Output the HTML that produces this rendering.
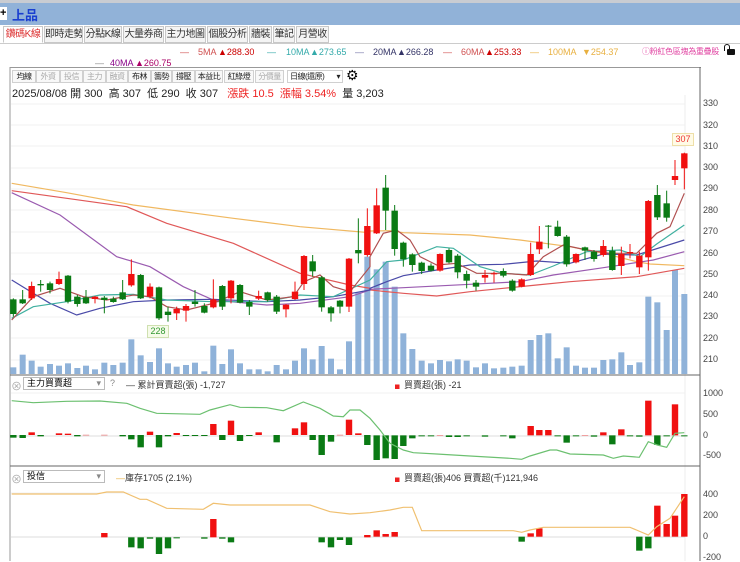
<!DOCTYPE html>
<html><head><meta charset="utf-8"><style>
*{margin:0;padding:0;box-sizing:border-box}
body{width:740px;height:561px;overflow:hidden;background:#fff;font-family:"Liberation Sans","Noto Sans CJK TC",sans-serif;position:relative}
.abs{position:absolute;white-space:nowrap}
.tab{position:absolute;top:26px;height:17px;border:1px solid #c8c8c8;background:#f4f4f4;font-size:10px;line-height:15px;text-align:center;color:#333;white-space:nowrap;overflow:hidden;letter-spacing:-0.5px}
.btn{position:absolute;top:70px;height:13px;border:1px solid #d0d0d0;background:#f8f8f8;font-size:8px;line-height:11px;text-align:center;color:#222;white-space:nowrap;overflow:hidden;letter-spacing:-0.5px}
.g{color:#aaa}
.lg{position:absolute;font-size:9px;white-space:nowrap}
.ax{position:absolute;left:703px;font-size:9px;color:#444}
</style></head><body>
<div class="abs" style="left:0;top:0;width:740px;height:3px;background:#c9ccd2"></div>
<div class="abs" style="left:0;top:3px;width:740px;height:22px;background:#91b2d8"></div>
<div class="abs" style="left:0;top:7px;width:7px;height:13px;background:#fff;font-size:11px;line-height:13px;font-weight:bold">+</div>
<div class="abs" style="left:12px;top:5px;font-size:13px;color:#1a3fd0;font-weight:bold">上品</div>
<div class="abs" style="left:0;top:25px;width:740px;height:19px;background:#fff"></div>
<div class="tab" style="left:3px;width:40px;background:#fff;color:#d33;border-bottom-color:#fff">鑽碼K線</div>
<div class="tab" style="left:44px;width:39px">即時走勢</div>
<div class="tab" style="left:84px;width:38px">分點K線</div>
<div class="tab" style="left:123px;width:41px">大量券商</div>
<div class="tab" style="left:165px;width:41px">主力地圖</div>
<div class="tab" style="left:207px;width:41px">個股分析</div>
<div class="tab" style="left:249px;width:23px">牆裝</div>
<div class="tab" style="left:273px;width:22px">筆記</div>
<div class="tab" style="left:296px;width:33px">月營收</div>
<div class="abs" style="left:0;top:43px;width:740px;height:1px;background:#ccc"></div>
<div class="lg" style="left:180px;top:47px;color:#d05050">—</div><div class="lg" style="left:198px;top:47px;color:#d05050">5MA</div><div class="lg" style="left:218px;top:47px;color:#c00">▲288.30</div>
<div class="lg" style="left:267px;top:47px;color:#3aa">—</div><div class="lg" style="left:286px;top:47px;color:#3aa">10MA</div><div class="lg" style="left:310px;top:47px;color:#3aa">▲273.65</div>
<div class="lg" style="left:355px;top:47px;color:#77a">—</div><div class="lg" style="left:373px;top:47px;color:#336">20MA</div><div class="lg" style="left:397px;top:47px;color:#336">▲266.28</div>
<div class="lg" style="left:443px;top:47px;color:#d05050">—</div><div class="lg" style="left:461px;top:47px;color:#d05050">60MA</div><div class="lg" style="left:485px;top:47px;color:#c00">▲253.33</div>
<div class="lg" style="left:530px;top:47px;color:#e8b040">—</div><div class="lg" style="left:548px;top:47px;color:#e8b040">100MA</div><div class="lg" style="left:582px;top:47px;color:#e8b040">▼254.37</div>
<div class="lg" style="left:642px;top:46px;color:#e040a0;font-size:8px;letter-spacing:-0.3px">ⓘ粉紅色區塊為重疊股</div>
<div class="abs" style="left:727px;top:49px;width:8px;height:6px;background:#111;border-radius:1px"></div>
<div class="abs" style="left:724px;top:44px;width:6px;height:7px;border:1.5px solid #111;border-bottom:none;border-radius:3px 3px 0 0"></div>
<div class="lg" style="left:95px;top:58px;color:#888">—</div><div class="lg" style="left:110px;top:58px;color:#808">40MA</div><div class="lg" style="left:135px;top:58px;color:#a06">▲260.75</div>
<div class="abs" style="left:10px;top:67px;width:691px;height:1px;background:#999"></div>
<div class="btn" style="left:12px;width:24px">均線</div>
<div class="btn g" style="left:36px;width:24px">外資</div>
<div class="btn g" style="left:60px;width:23px">投信</div>
<div class="btn g" style="left:83px;width:23px">主力</div>
<div class="btn g" style="left:106px;width:22px">融資</div>
<div class="btn" style="left:128px;width:23px">布林</div>
<div class="btn" style="left:151px;width:21px">籌勢</div>
<div class="btn" style="left:172px;width:23px">撐壓</div>
<div class="btn" style="left:195px;width:28px">本益比</div>
<div class="btn" style="left:224px;width:30px">紅綠燈</div>
<div class="btn g" style="left:255px;width:29px">分價量</div>
<div class="btn" style="left:287px;width:56px;text-align:left;padding-left:2px;background:#fff">日線(還原) <span style="float:right;padding-right:2px">▾</span></div>
<div class="abs" style="left:346px;top:67px;font-size:14px">⚙</div>
<div class="abs" style="left:12px;top:85px;font-size:11px;color:#222;white-space:nowrap">2025/08/08 開 300 &nbsp;高 307 &nbsp;低 290 &nbsp;收 307 &nbsp;&nbsp;<span style="color:#e22">漲跌 10.5 &nbsp;漲幅 3.54%</span> &nbsp;量 3,203</div>
<svg id="s" class="abs" style="left:0;top:0" width="740" height="561"></svg>
<div class="abs" style="left:11px;top:378px;font-size:11px;color:#aaa">⊗</div>
<div class="abs" style="left:23px;top:377px;width:82px;height:13px;border:1px solid #bbb;font-size:9px;line-height:11px;padding-left:3px">主力買賣超<span style="float:right;padding-right:3px;color:#888">▾</span></div>
<div class="abs" style="left:110px;top:378px;font-size:9px;color:#888">?</div>
<div class="lg" style="left:126px;top:378px;color:#333">— 累計買賣超(張) -1,727</div>
<div class="lg" style="left:395px;top:378px;color:#333"><span style="color:#e22">▖</span>買賣超(張) -21</div>
<div class="abs" style="left:11px;top:471px;font-size:11px;color:#aaa">⊗</div>
<div class="abs" style="left:23px;top:470px;width:82px;height:13px;border:1px solid #bbb;font-size:9px;line-height:11px;padding-left:3px">投信<span style="float:right;padding-right:3px;color:#888">▾</span></div>
<div class="lg" style="left:116px;top:471px;color:#333"><span style="color:#e8b040">—</span>庫存1705 (2.1%)</div>
<div class="lg" style="left:395px;top:471px;color:#333"><span style="color:#e22">▖</span>買賣超(張)406 買賣超(千)121,946</div>
<div class="ax" style="top:98px">330</div><div class="ax" style="top:120px">320</div><div class="ax" style="top:141px">310</div><div class="ax" style="top:162px">300</div><div class="ax" style="top:183px">290</div><div class="ax" style="top:205px">280</div><div class="ax" style="top:226px">270</div><div class="ax" style="top:248px">260</div><div class="ax" style="top:269px">250</div><div class="ax" style="top:290px">240</div><div class="ax" style="top:311px">230</div><div class="ax" style="top:333px">220</div><div class="ax" style="top:354px">210</div>
<div class="ax" style="top:388px">1000</div><div class="ax" style="top:409px">500</div><div class="ax" style="top:430px">0</div><div class="ax" style="top:450px">-500</div>
<div class="ax" style="top:489px">400</div><div class="ax" style="top:510px">200</div><div class="ax" style="top:531px">0</div><div class="ax" style="top:552px">-200</div>
<div class="abs" style="left:672px;top:133px;width:22px;height:13px;background:#fffbe6;border:1px solid #eedfa8;font-size:9px;color:#e33;text-align:center;line-height:11px">307</div>
<div class="abs" style="left:147px;top:325px;width:22px;height:13px;background:#f6fbe9;border:1px solid #cfe0b0;font-size:9px;color:#393;text-align:center;line-height:11px">228</div>
<script>
var s=document.getElementById('s'),h='';
function L(a,b,c,d,col,w){h+='<line x1="'+a+'" y1="'+b+'" x2="'+c+'" y2="'+d+'" stroke="'+col+'" stroke-width="'+(w||1)+'"/>';}
function R(x,y,w,hh,c){if(hh<0){y+=hh;hh=-hh}h+='<rect x="'+x+'" y="'+y+'" width="'+w+'" height="'+Math.max(hh,1)+'" fill="'+c+'"/>';}
function P(pts,col,w){h+='<polyline fill="none" stroke="'+col+'" stroke-width="'+(w||1)+'" points="'+pts.map(function(p){return p[0].toFixed(1)+','+p[1].toFixed(1)}).join(' ')+'"/>';}
L(10,67,10,561,'#999');L(700,67,700,561,'#666');L(685,95,685,561,'#eee');
L(10,375,700,375,'#666');L(10,466,700,466,'#666');
[104,125,146,168,189,210,232,253,274,296,317,338,360].forEach(function(y){L(11,y,685,y,'#f0f0f0')});
L(11,393,685,393,'#f0f0f0');L(11,493,685,493,'#f0f0f0');
L(11,436,685,436,'#ddd');L(11,537,685,537,'#ddd');
var RED='#f01010',GR='#0a7a14',VB='#8fb2d9';
var c4=[[40,'g',598,642,595,650],[68,'g',598,610,570,612],[95,'r',558,595,545,600],[122,'g',552,556,540,575],[150,'g',550,570,545,580],[177,'r',537,552,515,555],[204,'g',527,605,525,610],[232,'g',590,612,585,620],[258,'g',592,610,570,612],[285,'r',590,597,588,610],[313,'g',593,600,588,640],[340,'g',596,606,590,608],[368,'g',577,598,540,600],[394,'r',522,556,478,560],[422,'g',525,595,522,597],[450,'r',560,590,550,595],[477,'g',562,655,560,660],[504,'g',635,645,620,665],[530,'r',627,640,620,660],[558,'r',618,632,612,665],[585,'g',605,612,570,620],[613,'g',618,638,610,640],[640,'r',598,622,538,625],[667,'g',558,620,555,630],[693,'r',542,595,540,610],[720,'g',555,608,552,610],[748,'g',606,620,600,645],[776,'r',588,596,572,600],[803,'g',577,600,575,605],[830,'g',590,635,585,642],[858,'r',614,628,612,652],[885,'r',575,597,545,600],[912,'r',468,552,465,570],[938,'g',484,514,465,530],[965,'g',532,622,528,635],[993,'g',622,640,618,665],[1020,'g',602,620,600,640],[1047,'r',476,620,474,636],[1075,'g',450,460,355,490],[1102,'r',378,465,325,470]];
var c5=[[20,'r',316,400,265,402],[47,'g',263,332,225,390],[74,'g',332,447,315,467],[100,'g',428,478,425,500],[127,'g',463,495,460,515],[155,'g',488,513,485,522],[183,'g',497,512,490,515],[210,'r',462,512,460,515],[237,'g',450,487,445,490],[263,'g',467,517,462,535],[290,'g',522,542,512,565],[318,'g',548,560,540,572],[345,'r',525,533,510,548],[372,'r',520,522,515,548],[400,'g',513,527,505,532],[427,'g',542,572,538,575],[455,'r',538,560,535,562],[482,'r',462,525,428,528],[508,'r',425,448,378,462],[535,'g',377,380,375,445],[563,'g',380,408,362,410],[590,'g',410,493,405,500],[618,'r',462,487,460,490],[645,'g',442,452,440,480],[672,'g',455,477,450,485],[700,'r',438,465,420,470],[727,'g',452,510,440,512],[754,'r',462,498,440,525],[780,'r',456,460,432,475],[808,'r',467,502,455,522],[835,'r',303,472,300,512],[862,'g',285,352,255,360],[890,'g',310,353,272,365],[915,'r',228,240,180,255],[943,'r',160,205,158,268]];
var v4=[802,764,782,800,792,797,790,804,797,808,788,795,788,718,766,786,745,790,800,795,788,814,737,792,748,790,808,808,814,795,808,782,745,778,738,776,808,724,578,470];
var v5=[508,485,560,700,747,782,790,780,784,778,782,802,790,805,803,800,797,720,705,700,775,742,797,803,803,780,778,757,795,787,590,607,690,510,582];
function vol(x,zt){var t=100+zt/3;R(x-3,t,6,374-t,VB);}
c4.forEach(function(c,i){vol(c[0]/3,v4[i])});
c5.forEach(function(c,i){vol(370+c[0]/3,v5[i])});
function cd(x,c,off){var col=c[1]=='r'?RED:GR;L(x,off+c[4]/3,x,off+c[5]/3,col);R(x-3.2,off+c[2]/3,6.4,(c[3]-c[2])/3,col);}
function M(a,b,col){var p=a.map(function(q){return[q[0]/3,100+q[1]/3]}).concat(b.map(function(q){return[370+q[0]/3,100+q[1]/3]}));P(p,col,1.2);}
M([[35,250],[200,278],[400,315],[700,355],[900,380],[1110,398]],[[0,393],[60,392],[100,398],[300,405],[450,420],[600,440],[700,460],[800,485],[840,492],[943,497]],'#f0b860');
M([[35,272],[200,295],[380,320],[500,370],[700,430],[900,520],[1050,555],[1110,565]],[[0,570],[100,580],[200,588],[300,575],[400,565],[500,555],[600,545],[800,530],[943,505]],'#e05858');
M([[35,278],[180,345],[350,470],[450,500],[550,560],[640,600],[800,615],[900,610],[1050,590],[1110,570]],[[0,568],[100,563],[300,553],[450,545],[550,525],[700,503],[850,480],[943,455]],'#9a5bb0');
M([[35,540],[100,580],[150,610],[230,645],[300,625],[400,605],[500,600],[640,598],[800,605],[900,600],[1000,590],[1110,570]],[[0,565],[50,545],[100,527],[200,510],[300,495],[400,493],[500,483],[600,490],[700,462],[800,465],[943,420]],'#4a4aa8');
M([[35,655],[100,620],[200,605],[300,585],[400,583],[500,600],[640,605],[800,605],[900,585],[1000,590],[1110,540]],[[0,540],[50,485],[100,480],[200,440],[250,445],[330,500],[400,520],[480,525],[550,498],[650,455],[750,450],[810,470],[860,432],[943,375]],'#40b0a0');
M([[35,660],[100,590],[180,565],[250,590],[320,600],[400,585],[450,590],[500,620],[560,630],[640,610],[720,575],[800,600],[880,590],[912,545],[960,525],[1000,560],[1050,575],[1110,500]],[[0,470],[40,400],[80,390],[120,420],[150,470],[200,495],[260,490],[320,520],[400,520],[470,525],[520,470],[580,435],[650,450],[720,460],[800,460],[860,400],[900,380],[943,280]],'#b05050');
c4.forEach(function(c){cd(c[0]/3,c,100)});
c5.forEach(function(c){cd(370+c[0]/3,c,100)});
function bars(list,off,z,xo){list.forEach(function(b){var col=b[1]=='r'?RED:b[1]=='p'?'#f0a0a0':GR;var a=off+b[2]/3,e=off+b[3]/3;R(xo+b[0]/3-3.2,Math.min(a,e),6.4,Math.abs(e-a),col);});}
var s1a=[[40,'g',195,203],[68,'g',195,204],[95,'r',187,195],[122,'g',195,199],[177,'r',190,195],[204,'r',191,195],[232,'g',195,199],[258,'p',194,196],[313,'p',194,196],[368,'g',195,199],[394,'g',195,208],[422,'g',195,232],[450,'r',185,195],[477,'g',195,232],[504,'g',195,199],[530,'r',189,195],[558,'g',195,198],[585,'g',195,198],[613,'g',195,198],[640,'r',162,195],[667,'g',195,210],[693,'r',152,195],[720,'g',195,213],[748,'g',195,198],[776,'r',187,195],[830,'g',195,217],[885,'r',175,195],[912,'r',157,195],[938,'g',195,210],[965,'g',195,255],[993,'g',195,215],[1020,'p',194,196],[1047,'r',149,195],[1075,'r',190,195],[1102,'g',195,225]];
var s1b=[[20,'g',196,270],[47,'g',196,265],[74,'g',196,267],[100,'g',196,228],[127,'g',196,205],[155,'g',196,199],[183,'g',196,199],[210,'p',195,197],[237,'g',196,201],[263,'g',196,201],[290,'g',196,199],[345,'g',196,200],[400,'g',196,199],[427,'g',196,205],[482,'r',168,196],[508,'r',180,196],[535,'r',180,196],[563,'g',196,199],[590,'g',196,218],[618,'g',196,199],[645,'p',195,197],[672,'g',196,200],[700,'r',187,196],[727,'g',196,223],[754,'r',178,196],[780,'g',196,198],[808,'g',196,200],[835,'r',92,196],[862,'g',196,225],[890,'g',196,199],[915,'r',103,196],[943,'g',196,199]];
bars(s1a,370,0,0);bars(s1b,370,0,370);
var l1=[[35,92],[100,98],[200,94],[300,93],[380,100],[420,115],[470,130],[600,133],[630,120],[690,104],[720,112],[800,113],[850,122],[910,96],[960,115],[1000,138],[1030,140],[1050,120],[1080,120],[1110,145]].map(function(q){return[q[0]/3,370+q[1]/3]}).concat([[30,180],[60,220],[100,240],[130,248],[200,252],[300,258],[420,265],[455,268],[480,258],[540,240],[560,240],[600,252],[700,255],[730,265],[760,258],[808,262],[835,215],[862,225],[890,232],[915,190],[943,188]].map(function(q){return[370+q[0]/3,370+q[1]/3]}));
P(l1,'#6cc070',1.2);
var s2a=[[313,'r',219,232],[394,'g',232,262],[422,'g',232,265],[450,'g',232,236],[477,'g',232,282],[504,'g',232,265],[530,'g',232,235],[613,'g',232,236],[640,'r',177,232],[667,'g',232,236],[693,'g',232,247],[965,'g',232,247],[993,'g',232,262],[1020,'g',232,240],[1047,'g',232,255],[1102,'r',225,232]];
var s2b=[[20,'r',481,500],[47,'r',492,500],[74,'r',486,500],[455,'g',500,515],[482,'r',490,500],[508,'r',475,500],[808,'g',500,542],[835,'g',500,535],[862,'r',407,500],[890,'r',462,500],[915,'r',437,500],[943,'r',372,500]];
bars(s2a,460,0,0);bars(s2b,370,0,370);
var l2=[[35,102],[290,102],[320,96],[370,96],[420,118],[440,118],[500,145],[610,148],[640,130],[690,135],[930,135],[990,155],[1050,162],[1110,158]].map(function(q){return[q[0]/3,460+q[1]/3]}).concat([[60,420],[100,412],[127,412],[155,482],[430,482],[455,487],[480,480],[520,472],[780,472],[835,495],[860,470],[900,445],[943,380]].map(function(q){return[370+q[0]/3,370+q[1]/3]}));
P(l2,'#f0c070',1.2);
s.innerHTML=h;
</script>
</body></html>
